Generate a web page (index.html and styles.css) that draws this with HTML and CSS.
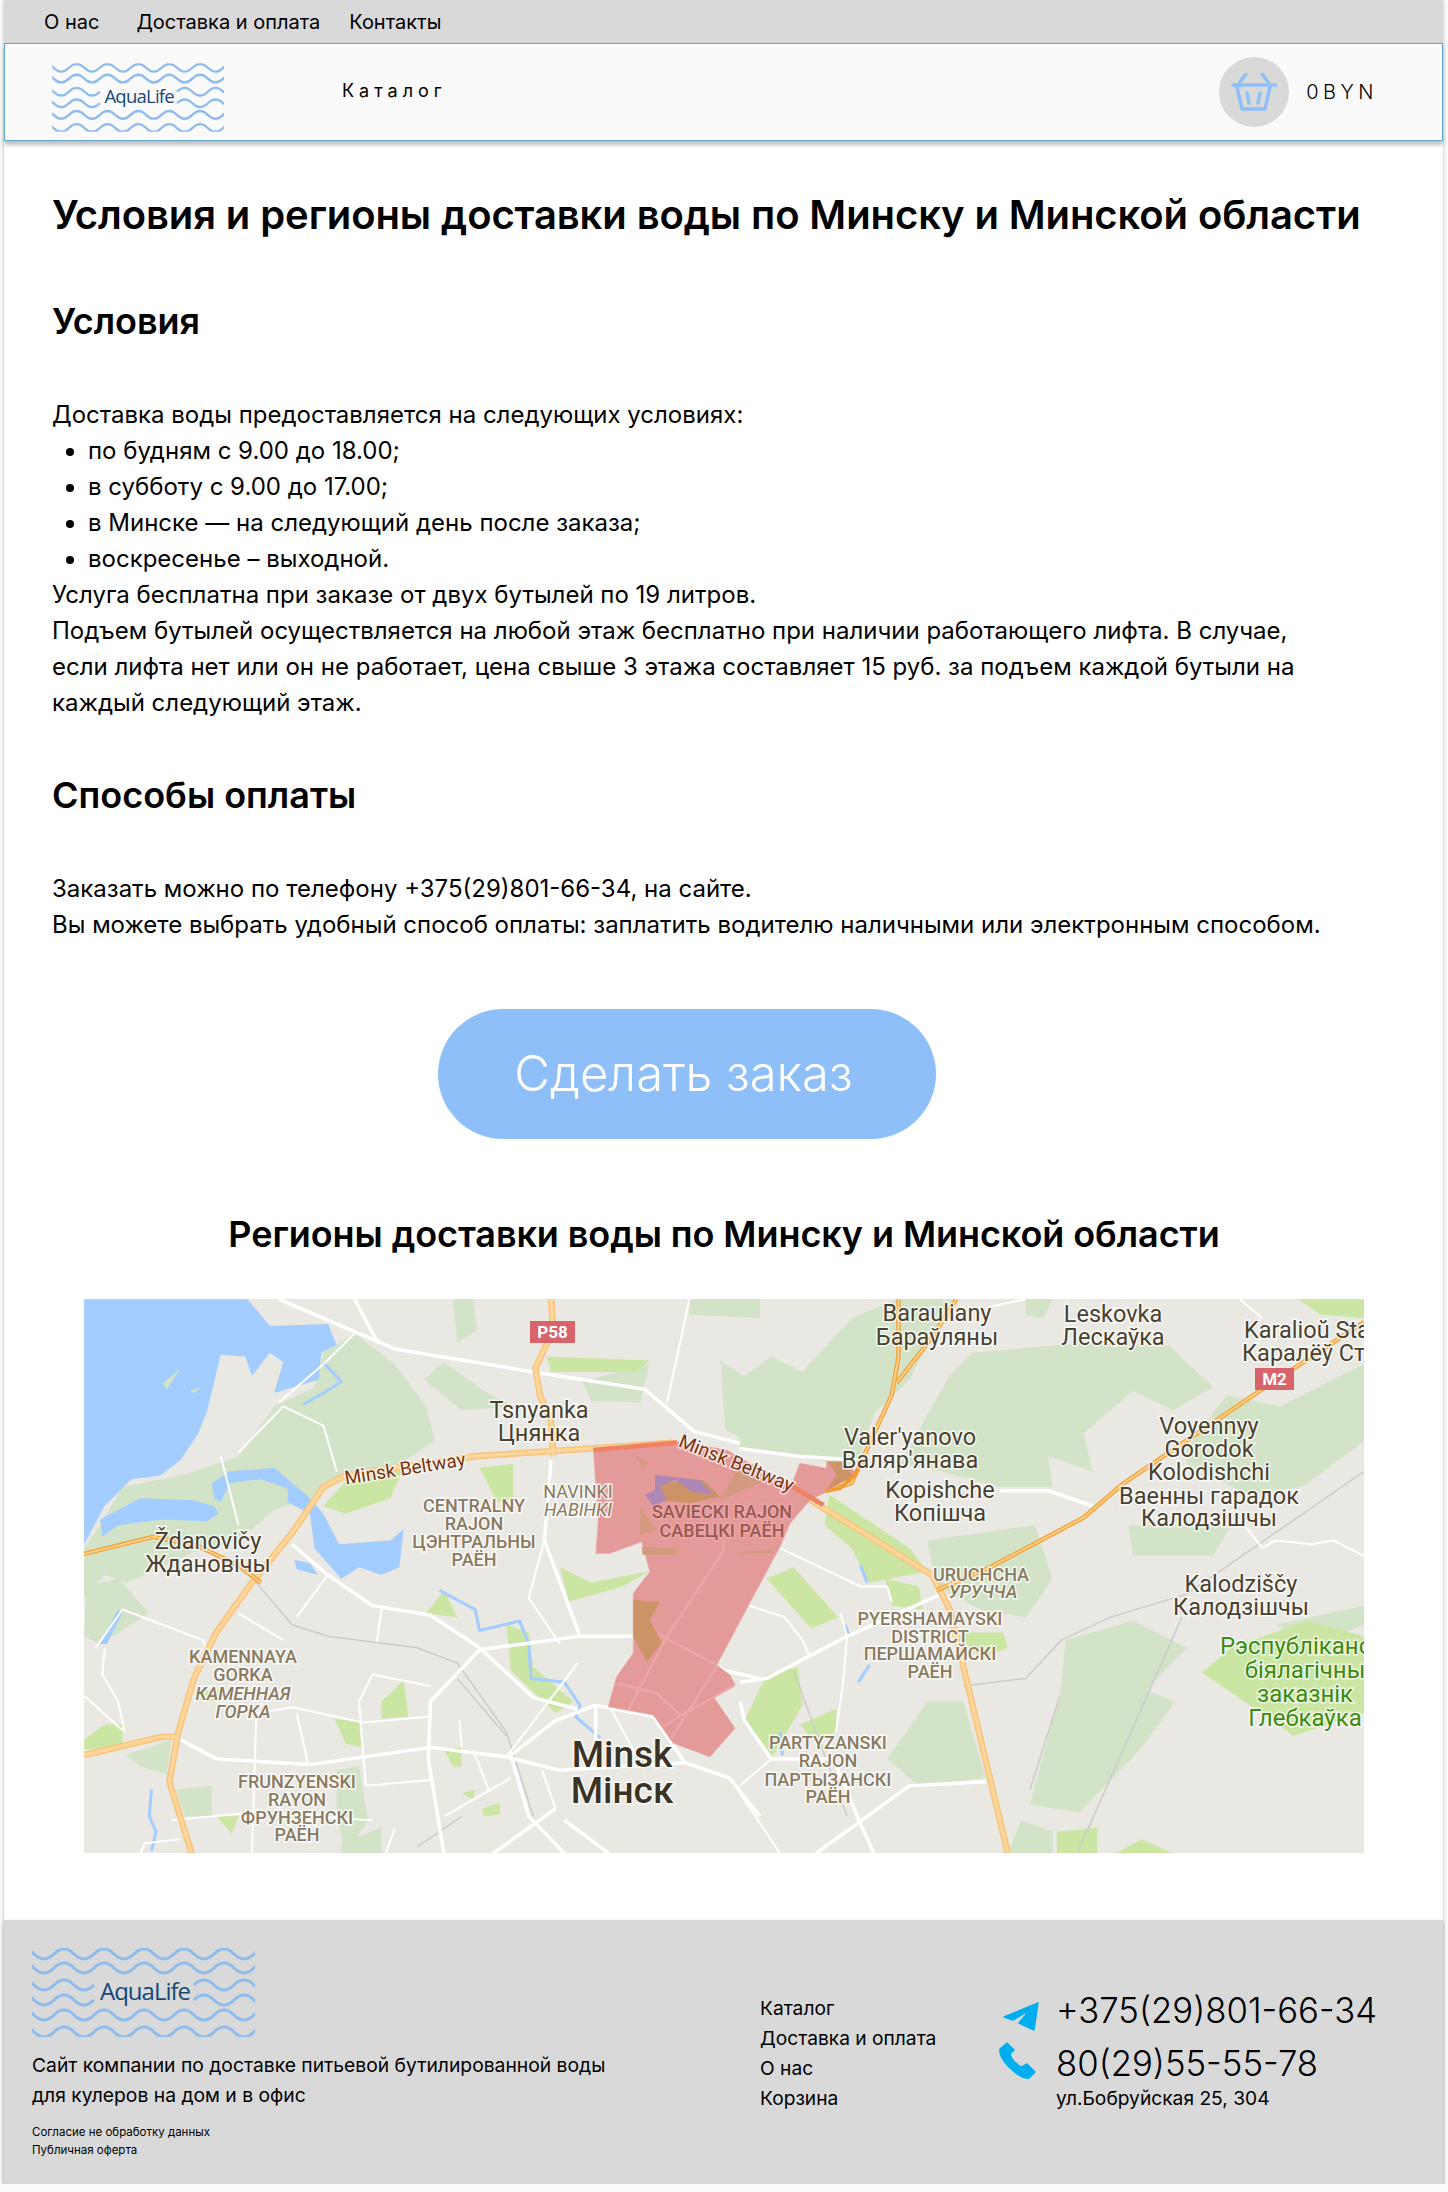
FILE: index.html
```html
<!DOCTYPE html>
<html lang="ru">
<head>
<meta charset="utf-8">
<title>Условия и регионы доставки</title>
<link rel="stylesheet" href="styles.css">
</head>
<body>
<svg class="defs" width="0" height="0" aria-hidden="true">
  <symbol id="waves" viewBox="0 0 223 89">
    <g class="wave">
      <path d="M-18 6q10-10 20 0t20 0 20 0 20 0 20 0 20 0 20 0 20 0 20 0 20 0 20 0 20 0 20 0"/>
      <path d="M-18 20q10-10 20 0t20 0 20 0 20 0 20 0 20 0 20 0 20 0 20 0 20 0 20 0 20 0 20 0"/>
      <path d="M-18 37q10-10 20 0t20 0 20 0 20 0"/>
      <path d="M162 37q10-10 20 0t20 0 20 0 20 0"/>
      <path d="M-18 52q10-10 20 0t20 0 20 0 20 0"/>
      <path d="M162 52q10-10 20 0t20 0 20 0 20 0"/>
      <path d="M-18 67q10-10 20 0t20 0 20 0 20 0 20 0 20 0 20 0 20 0 20 0 20 0 20 0 20 0 20 0"/>
      <path d="M-18 84q10-10 20 0t20 0 20 0 20 0 20 0 20 0 20 0 20 0 20 0 20 0 20 0 20 0 20 0"/>
    </g>
  </symbol>
</svg>
<div class="page">
  <nav class="topbar">
    <a class="top-a">О нас</a>
    <a class="top-b">Доставка и оплата</a>
    <a class="top-c">Контакты</a>
  </nav>
  <header class="header">
    <svg class="logo-small" viewBox="0 0 223 89"><use href="#waves"/><text class="logo-text" x="113" y="52">AquaLife</text></svg>
    <a class="catalog">Каталог</a>
    <div class="cart">
      <span class="cart-circle">
        <svg class="cart-icon" viewBox="0 0 46 38">
          <path d="M2 12H45M6 14L11 36H34L39 14M15 1L9 9M31 1L37 9M16 20L18 30M29 20L27 30"/>
        </svg>
      </span>
      <span class="cart-sum">0BYN</span>
    </div>
  </header>
  <main class="main">
    <h1 class="title">Условия и регионы доставки воды по Минску и Минской области</h1>
    <h2 class="sub sub-first">Условия</h2>
    <div class="text text-first">
      <div>Доставка воды предоставляется на следующих условиях:</div>
      <ul class="list">
        <li>по будням с 9.00 до 18.00;</li>
        <li>в субботу с 9.00 до 17.00;</li>
        <li>в Минске — на следующий день после заказа;</li>
        <li>воскресенье – выходной.</li>
      </ul>
      <div>Услуга бесплатна при заказе от двух бутылей по 19 литров.</div>
      <div>Подъем бутылей осуществляется на любой этаж бесплатно при наличии работающего лифта. В случае, если лифта нет или он не работает, цена свыше 3 этажа составляет 15 руб. за подъем каждой бутыли на каждый следующий этаж.</div>
    </div>
    <h2 class="sub sub-second">Способы оплаты</h2>
    <div class="text text-second">
      <div>Заказать можно по телефону +375(29)801-66-34, на сайте.</div>
      <div>Вы можете выбрать удобный способ оплаты: заплатить водителю наличными или электронным способом.</div>
    </div>
    <div class="order-wrap"><a class="order">Сделать заказ</a></div>
    <h2 class="regions">Регионы доставки воды по Минску и Минской области</h2>
    <svg class="map" viewBox="0 0 1280 554">
      <rect class="m-land" width="1280" height="554"/>
      <!-- left half, traced in crop coordinates -->
      <g transform="translate(-24,-19) scale(.4464,.3831)">
        <path class="m-forest" d="M660 140L590 190 570 280 480 330 400 460 300 500 230 520 140 540 90 640 54 700V830L100 770 150 790 300 710 400 680 480 600 560 570 640 520 760 480 840 420 820 330 750 220Z"/>
        <path class="m-forest" d="M880 50L925 50 935 130 890 165ZM815 260L860 215 950 290 1020 330 900 340ZM1170 265L1320 220 1300 320 1190 315ZM1480 210L1568 280V440L1490 390ZM1410 50H1568V100L1410 90Z"/>
        <path class="m-forest" d="M60 800L130 780 200 870 90 950 54 930ZM148 1240L250 1200 240 1290 180 1270ZM260 1330L340 1320 340 1400 280 1400ZM620 1280L670 1270 690 1410 640 1497 620 1400ZM630 1470L720 1430 720 1497H630Z"/>
        <path class="m-water" d="M54 50H420L470 120 600 115 620 170 585 190 580 260 480 295 500 215 470 190 430 250 415 200 360 195 330 340 310 400 270 470 225 510 160 520 100 590 54 690Z"/>
        <path class="m-water" d="M340 530L380 500 480 490 560 570 590 610 625 690 740 680 770 650 760 750 720 770 670 750 630 780 570 700 560 610 510 580 510 545 450 520 380 530 360 580 345 570ZM90 625L180 570 300 575 345 590 355 610 330 630 230 625 130 640 95 670ZM525 730L560 740 578 770 530 755ZM130 860L140 870 105 950 90 950Z"/>
        <path class="m-forest" d="M230 270L270 230 240 285ZM290 290L315 280 300 295Z"/>
        <path class="m-park" d="M590 590L640 525 770 490 740 570 640 610ZM940 490L1015 480V570L980 580ZM1120 750L1190 790 1320 760 1260 800 1140 840ZM820 870L860 810 890 880ZM1000 900L1050 920 1060 1010 1150 1100 1110 1130 1010 1020ZM720 1100L770 1045 780 1140 720 1145ZM615 1145L670 1155 675 1220 640 1210ZM54 1200L100 1160 140 1160 140 1220 54 1225ZM860 1225L900 1220 900 1270 880 1270ZM300 1075L360 1070 360 1100 310 1095ZM350 1400L400 1400 385 1445ZM1090 200L1320 210 1290 240 1100 240ZM900 1340L930 1330 925 1355ZM945 1380L985 1365 985 1395 950 1400Z"/>
        <g class="m-river">
          <path d="M590 215L630 265 590 295 545 325M850 810L930 860 940 915 1030 890 1050 950 1055 1040 1130 1050 1165 1110 1155 1140 1210 1195M205 1330L200 1400 215 1440 205 1490"/>
        </g>
        <g class="m-rail">
          <path d="M440 790L520 900 600 930 800 960 890 1000 1000 1180 1060 1400M890 1040L1000 1190M900 1400L800 1480"/>
        </g>
        <g class="m-road">
          <path d="M490 50L750 180 1060 240 1310 285 1420 395 1568 440M660 50L710 160M1100 470L1085 680 1165 930 1350 930 1490 1020 1568 1040M520 690L600 770 700 850 830 875 940 960 1060 1090 1160 1120M940 965L1165 930M940 965L830 1100 825 1250 860 1497M1010 1240L1110 1150 1200 1110 1330 1140 1400 1260 1500 1300 1568 1400M1010 1240L1050 1400 1130 1497M1110 1380L970 1497M1230 1497L1130 1410M1200 1110V1200M270 1200L350 1250 560 1265 830 1220 1000 1245 1120 1280 1400 1260"/>
        </g>
        <g class="m-minor">
          <path d="M1410 50L1360 320M530 880L600 770M720 860L710 945M825 1140L680 1155 520 1115 440 1130M670 1100L700 1030 830 1060M670 1100L685 1320M140 860L320 940 330 970M80 960L140 860M400 870L500 940M100 960L95 1030 130 1100 145 1180M54 1085L140 1175M360 460L400 640M400 450L500 330 590 380 620 500M490 320L590 220 660 140M250 1410L430 1390 700 1410M180 1497L190 1470 270 1460M440 1130L430 1497M530 1130L555 1260M895 1150L900 1220M930 1240L960 1330M1000 1245L1160 1000M1085 680L1050 830 1120 950M685 1320L830 1305M860 1400L1010 1300M750 1430L730 1497M1080 1280L1110 1380M1230 1110L1290 1240"/>
        </g>
        <g class="m-hw">
          <path d="M295 1497L245 1310 265 1180 300 1040 350 920 430 790 520 660 590 540 640 510 930 460 1190 440 1370 425M54 1240L230 1192H262M1100 50L1105 130 1065 230 1075 300 1100 370 1105 460"/>
        </g>
        <g class="m-hw-in">
          <path d="M295 1497L245 1310 265 1180 300 1040 350 920 430 790 520 660 590 540 640 510 930 460 1190 440 1370 425M54 1240L230 1192H262M1100 50L1105 130 1065 230 1075 300 1100 370 1105 460"/>
        </g>
        <g class="m-hw-hot">
          <path d="M54 715L210 670 310 695 400 745 450 790"/>
        </g>
        <g class="m-hw-core">
          <path d="M54 715L210 670 310 695 400 745 450 790"/>
        </g>
      </g>
      <!-- right half, traced in crop coordinates -->
      <g transform="translate(656,-19) scale(.4464,.3831)">
        <path class="m-forest" d="M0 260L70 200 140 240 250 100 350 50H480L440 130 380 260 300 350 260 490 130 460 0 440ZM430 330L470 250 520 190 760 165 960 170 1060 280 970 340 880 290 770 400 790 500 690 460 700 540 580 540 450 500 360 480Z"/>
        <path class="m-forest" d="M1090 300L1210 330 1398 220V420L1260 540 1140 560 1000 480 1000 440ZM650 1370L720 1060 730 940 880 890 1000 960 910 1070 975 1100 900 1220 760 1390ZM870 640L1100 640 1060 720 880 720ZM600 1497L630 1410 700 1440V1497ZM330 1250L420 1100 500 1100 550 1300 400 1320Z"/>
        <path class="m-forest" d="M1200 900L1398 850V900L1290 950ZM420 680L660 640 700 780 640 880 540 860 440 800ZM640 50H700L680 100 640 90Z"/>
        <path class="m-park" d="M200 560L380 700 420 760 290 790 250 700 190 640ZM10 1150L60 1030 130 1010 140 1110 70 1250ZM60 780L120 750 220 880 160 910ZM480 920L590 920 600 960 540 990ZM710 1440L800 1430V1497H710ZM840 1497L900 1460 970 1497ZM1250 50H1398V100L1300 90ZM1035 1025L1100 960 1270 890 1398 930V1130L1240 1190 1130 1100ZM135 1160L215 1120 215 1180 160 1200ZM325 780L400 800 410 860 340 850Z"/>
        <g class="m-river">
          <path d="M270 745L285 790M265 1050L290 1005M235 900L245 930M90 1180L95 1240"/>
        </g>
        <g class="m-rail">
          <path d="M755 1497L990 880M720 940L830 880 1000 820 1398 500M500 1060L640 1040 720 940M650 1330L715 1090M120 1020L240 1400"/>
        </g>
        <g class="m-road">
          <path d="M0 440L130 460 260 470M580 550H690L790 590M0 1050L60 1040 240 930 450 820M0 1100L10 1150 70 1250H210L270 1420 300 1497M170 1497L380 1320 550 1310"/>
        </g>
        <g class="m-minor">
          <path d="M20 850L100 880 140 940 155 980M90 700L270 800 330 800 340 840M240 930L225 870M240 930L230 1060 215 1180M0 1320L70 1250M1120 50L1170 100M1130 640L1170 700 1200 680 1280 690 1330 680 1398 720M90 1497L0 1340M560 70L640 50"/>
        </g>
        <g class="m-hw">
          <path d="M-153 425L-23 460 110 540 430 770 470 860 600 1497"/>
        </g>
        <g class="m-hw-in">
          <path d="M-153 425L-23 460 110 540 430 770 470 860 600 1497"/>
        </g>
        <g class="m-hw-hot">
          <path d="M440 810L560 750 770 620 860 530 1170 285 1398 110M195 550L250 530 340 300 355 200V50M350 270L430 150 485 50"/>
        </g>
        <g class="m-hw-core">
          <path d="M440 810L560 750 770 620 860 530 1170 285 1398 110M195 550L250 530 340 300 355 200V50M350 270L430 150 485 50"/>
        </g>
      </g>
      <!-- delivery zone, traced at 3x -->
      <g transform="translate(476,121) scale(.3333)">
        <path class="z-fill" d="M100 85L350 65 500 90 640 170 695 195 720 130 800 145 800 125 850 125 890 160 840 190 800 215 750 240 690 310 660 380 590 510 470 735 510 765 525 795 460 830 525 925 450 1010 340 970 280 885 145 860 170 770 220 700V520L270 455 245 365 150 400H108L115 300Z"/>
        <path class="z-tan" d="M530 150L620 180 480 240ZM245 380L355 385 350 405 248 405ZM540 395L640 390 640 398 545 402ZM225 105L260 130 250 145ZM240 260L290 330 240 345Z"/>
        <path class="z-brown" d="M220 540L300 545 270 600 305 670 260 725 220 650ZM300 190L430 180 480 230 390 250 300 240ZM805 125H850L880 170 800 210 830 165Z"/>
        <path class="z-purple" d="M285 165L420 180 460 225 395 215 345 180 300 200 320 240 280 260 255 225 285 210Z"/>
        <path class="z-road" d="M490 360V395L320 650 205 870M300 645L470 735M470 740L330 960M170 790L290 820 360 885M525 795L340 900 310 920"/>
        <path class="z-belt" d="M100 90L350 68M690 195L790 255"/>
        <path class="z-hot" d="M800 213L840 205 880 170 905 130"/>
      </g>
      <g class="m-badge-group">
        <rect class="m-badge" x="446" y="22" width="45" height="22"/>
        <text class="m-badge-t" x="468.500" y="39">P58</text>
        <rect class="m-badge" x="1171" y="69" width="39" height="22"/>
        <text class="m-badge-t" x="1190.500" y="86">M2</text>
      </g>
      <g class="l-place">
        <text x="455" y="119">Tsnyanka</text><text x="455" y="142">Цнянка</text>
        <text x="124" y="250">Ždanovičy</text><text x="124" y="273">Ждановічы</text>
        <text x="853" y="22">Barauliany</text><text x="853" y="46">Бараўляны</text>
        <text x="1029" y="23">Leskovka</text><text x="1029" y="46">Лескаўка</text>
        <text class="l-start" x="1160" y="39">Karalioŭ Stanki</text><text class="l-start" x="1158" y="62">Каралёў Станкі</text>
        <text x="826" y="146">Valer'yanovo</text><text x="826" y="169">Валяр'янава</text>
        <text x="856" y="199">Kopishche</text><text x="856" y="222">Копішча</text>
        <text x="1125" y="135">Voyennyy</text><text x="1125" y="158">Gorodok</text><text x="1125" y="181">Kolodishchi</text><text x="1125" y="205">Ваенны гарадок</text><text x="1125" y="227">Калодзішчы</text>
        <text x="1157" y="293">Kalodziščy</text><text x="1157" y="316">Калодзішчы</text>
      </g>
      <g class="l-city">
        <text x="538" y="468">Minsk</text><text x="538" y="504">Мінск</text>
      </g>
      <g class="l-dist">
        <text x="390" y="213">CENTRALNY</text><text x="390" y="231">RAJON</text><text x="390" y="249">ЦЭНТРАЛЬНЫ</text><text x="390" y="267">РАЁН</text>
        <text x="159" y="364">KAMENNAYA</text><text x="159" y="382">GORKA</text><text class="l-it" x="159" y="401">КАМЕННАЯ</text><text class="l-it" x="159" y="419">ГОРКА</text>
        <text x="213" y="489">FRUNZYENSKI</text><text x="213" y="507">RAYON</text><text x="213" y="525">ФРУНЗЕНСКІ</text><text x="213" y="542">РАЁН</text>
        <text x="897" y="282">URUCHCHA</text><text class="l-it" x="899" y="299">УРУЧЧА</text>
        <text x="846" y="326">PYERSHAMAYSKI</text><text x="846" y="344">DISTRICT</text><text x="846" y="361">ПЕРШАМАЙСКІ</text><text x="846" y="379">РАЁН</text>
        <text x="744" y="450">PARTYZANSKI</text><text x="744" y="468">RAJON</text><text x="744" y="487">ПАРТЫЗАНСКІ</text><text x="744" y="504">РАЁН</text>
        <text class="l-thin" x="494" y="199">NAVINKI</text><text class="l-thin l-it" x="494" y="217">НАВІНКІ</text>
      </g>
      <g class="l-zone">
        <text x="638" y="219">SAVIECKI RAJON</text><text x="638" y="238">САВЕЦКІ РАЁН</text>
      </g>
      <g class="l-green">
        <text x="1221" y="355">Рэспубліканскі</text><text x="1221" y="379">біялагічны</text><text x="1221" y="403">заказнік</text><text x="1221" y="427">Глебкаўка</text>
      </g>
      <g class="l-belt">
        <text transform="translate(322,176) rotate(-9)">Minsk Beltway</text>
        <text transform="translate(650,170) rotate(22)">Minsk Beltway</text>
      </g>
    </svg>
  </main>
  <footer class="footer">
    <div class="f-about">
      <svg class="logo-big" viewBox="0 0 223 89"><use href="#waves"/><text class="logo-text" x="113" y="52">AquaLife</text></svg>
      <p class="f-desc">Сайт компании по доставке питьевой бутилированной воды<br>для кулеров на дом и в офис</p>
      <p class="f-legal">Согласие не обработку данных<br>Публичная оферта</p>
    </div>
    <div class="f-links">
      <a>Каталог</a>
      <a>Доставка и оплата</a>
      <a>О нас</a>
      <a>Корзина</a>
    </div>
    <div class="f-contacts">
      <svg class="i-tg" viewBox="0 0 36 30"><path d="M35 1L1 15 10 18 27 8 16 21 31 28Z"/></svg>
      <span class="phone">+375(29)801-66-34</span>
      <svg class="i-ph" viewBox="0 0 39 39"><path d="M9 2L16 9 12 13C13 17 15 20 18 22 20 24 22 26 24 26L29 23 37 31 31 37C27 38 20 35 10 25 4 18 1 12 2 8Z"/></svg>
      <span class="phone">80(29)55-55-78</span>
      <span class="addr">ул.Бобруйская 25, 304</span>
    </div>
  </footer>
</div>
</body>
</html>
```
FILE: styles.css
```css
* { box-sizing: border-box; }
html, body { margin: 0; padding: 0; }
body {
  background: #fbfbfb;
  font-family: Inter, "Noto Sans", sans-serif;
  color: #000;
}
.defs { position: absolute; }
.page {
  width: 1439px;
  margin-left: 4px;
  height: 2184px;
  background: #fff;
  box-shadow: 0 0 4px rgba(0, 0, 0, .25);
}
.topbar {
  height: 43px;
  background: #d9d9d9;
  display: flex;
  align-items: center;
  font-size: 20px;
}
.top-a { margin-left: 40px; }
.top-b { margin-left: 37px; }
.top-c { margin-left: 29px; }

.header {
  height: 98px;
  background: #fafafa;
  border: 1px solid #62a6c8;
  box-shadow: 0 4px 4px rgba(0, 0, 0, .25);
  display: flex;
  align-items: center;
  position: relative;
  padding-left: 47px;
}
.logo-small { width: 172px; height: 69px; margin-top: 10px; }
.catalog {
  margin-left: 118px;
  font-size: 18px;
  letter-spacing: 5px;
  margin-top: -4px;
}
.cart {
  margin-left: auto;
  display: flex;
  align-items: center;
  padding-right: 64px;
}
.cart-circle {
  width: 70px;
  height: 70px;
  border-radius: 50%;
  background: #d9d9d9;
  display: flex;
  align-items: center;
  justify-content: center;
}
.cart-icon {
  width: 46px;
  height: 38px;
  fill: none;
  stroke: #8fbff8;
  stroke-width: 3.5;
  stroke-linecap: round;
  stroke-linejoin: round;
}
.cart-sum {
  margin-left: 17px;
  font-size: 20px;
  font-weight: 300;
  letter-spacing: 4.500px;
}
.wave path { fill: none; stroke: #8fbcec; stroke-width: 3; }
.logo-text {
  font-family: "Open Sans", sans-serif;
  font-size: 24px;
  font-weight: 500;
  fill: #13477b;
  text-anchor: middle;
  letter-spacing: -1px;
}
.logo-big { width: 223px; height: 89px; display: block; }

.main { padding: 50px 0 0 48px; }
.title { margin: 0; font-size: 40px; line-height: 48px; font-weight: 600; letter-spacing: -.1px; }
.sub { margin: 0; font-size: 36px; line-height: 44px; font-weight: 600; }
.sub-first { margin-top: 60px; }
.sub-second { margin-top: 52px; }
.text { font-size: 24px; line-height: 36px; width: 1290px; }
.text-first { margin-top: 54px; }
.text-second { margin-top: 54px; }
.list { margin: 0; padding: 0 0 0 36px; }
.order-wrap { display: flex; margin-top: 66px; padding-left: 386px; }
.order {
  width: 498px;
  height: 130px;
  border-radius: 65px;
  background: #8fbff8;
  color: #fff;
  font-size: 49px;
  font-weight: 300;
  padding: 0 7px 2px 0;
  display: flex;
  align-items: center;
  justify-content: center;
}
.regions {
  margin: 73px 0 0;
  width: 1344px;
  text-align: center;
  font-size: 36px;
  line-height: 44px;
  font-weight: 600;
  letter-spacing: -.08px;
}
.map { display: block; width: 1280px; height: 554px; margin: 43px 0 0 32px; }

.m-land { fill: #e9e8e3; }
.m-forest { fill: #d2e3c8; }
.m-park { fill: #cbe6a3; }
.m-water { fill: #a3ccff; }
.m-road path, .m-minor path, .m-rail path, .m-river path,
.m-hw path, .m-hw-in path, .m-hw-hot path, .m-hw-core path {
  fill: none;
  vector-effect: non-scaling-stroke;
  stroke-linejoin: round;
}
.m-road path { stroke: #fff; stroke-width: 3.5px; }
.m-minor path { stroke: #fff; stroke-width: 2px; }
.m-rail path { stroke: #cbcbcb; stroke-width: 1.5px; }
.m-river path { stroke: #a3ccff; stroke-width: 3px; }
.m-hw path { stroke: #f8c37c; stroke-width: 6.5px; }
.m-hw-in path { stroke: #ffd699; stroke-width: 3.5px; }
.m-hw-hot path { stroke: #f3a63c; stroke-width: 4.5px; }
.m-hw-core path { stroke: #ffd699; stroke-width: 1.5px; }
.z-fill { fill: #e59a9a; stroke: #eaa0a0; stroke-width: 2; }
.z-brown { fill: #cc9466; }
.z-tan { fill: #d49a80; }
.z-purple { fill: #ae88b4; }
.z-road { fill: none; stroke: #eda7a7; stroke-width: 7; }
.z-belt { fill: none; stroke: #ee8262; stroke-width: 14; }
.z-hot { fill: none; stroke: #f29a30; stroke-width: 11; stroke-linecap: round; }
.m-badge { fill: #d9636a; }
.map text { paint-order: stroke; text-anchor: middle; font-family: Roboto, sans-serif; }
.map .m-badge-t { font-size: 17px; font-weight: 700; fill: #fff; }
.l-place text {
  font-size: 23.500px;
  fill: #4a4130;
  stroke: rgba(255, 255, 255, .75);
  stroke-width: 3px;
}
.map .l-place .l-start { text-anchor: start; }
.l-city text {
  font-size: 37px;
  font-weight: 500;
  fill: #3a3325;
  stroke: rgba(255, 255, 255, .8);
  stroke-width: 3px;
}
.l-dist text {
  font-size: 18px;
  font-weight: 500;
  fill: #8a7a60;
  stroke: rgba(255, 255, 255, .75);
  stroke-width: 3px;
}
.l-dist .l-it { font-style: italic; }
.l-dist .l-thin { font-weight: 400; }
.l-zone text {
  font-size: 18px;
  font-weight: 500;
  fill: #985a52;
  stroke: rgba(240, 170, 170, .7);
  stroke-width: 3px;
}
.l-green text {
  font-size: 24px;
  fill: #3f8a10;
  stroke: rgba(255, 255, 255, .7);
  stroke-width: 3px;
}
.l-belt text {
  font-size: 19px;
  fill: #7a3410;
  stroke: rgba(255, 255, 255, .7);
  stroke-width: 3px;
}

.footer {
  height: 264px;
  margin-top: 67px;
  background: #d9d9d9;
  box-shadow: 0 2px 4px rgba(0, 0, 0, .25);
  display: flex;
  align-items: flex-start;
}
.f-about { width: 756px; padding: 28px 0 0 28px; }
.f-desc { margin: 13px 0 0; font-size: 19.300px; line-height: 30px; }
.f-legal { margin: 13px 0 0; font-size: 11.500px; line-height: 18px; }
.f-links {
  width: 243px;
  padding-top: 73px;
  display: flex;
  flex-direction: column;
  font-size: 19.200px;
  line-height: 30px;
}
.f-contacts {
  padding-top: 68px;
  display: grid;
  grid-template-columns: 54px auto;
  align-items: start;
}
.phone { font-size: 34.700px; line-height: 44px; font-weight: 300; margin-left: -1px; }
.phone:nth-of-type(2) { margin-top: 9px; }
.addr { grid-column: 2; font-size: 19.200px; line-height: 30px; margin-top: -2px; margin-left: -1px; }
.i-tg { width: 36px; height: 30px; margin-top: 14px; fill: #00aeef; stroke: #00aeef; stroke-width: 1.5; stroke-linejoin: round; }
.i-ph { width: 39px; height: 39px; margin: 9px 0 0 -5px; fill: #00aeef; stroke: #00aeef; stroke-width: 1.5; stroke-linejoin: round; }
```
